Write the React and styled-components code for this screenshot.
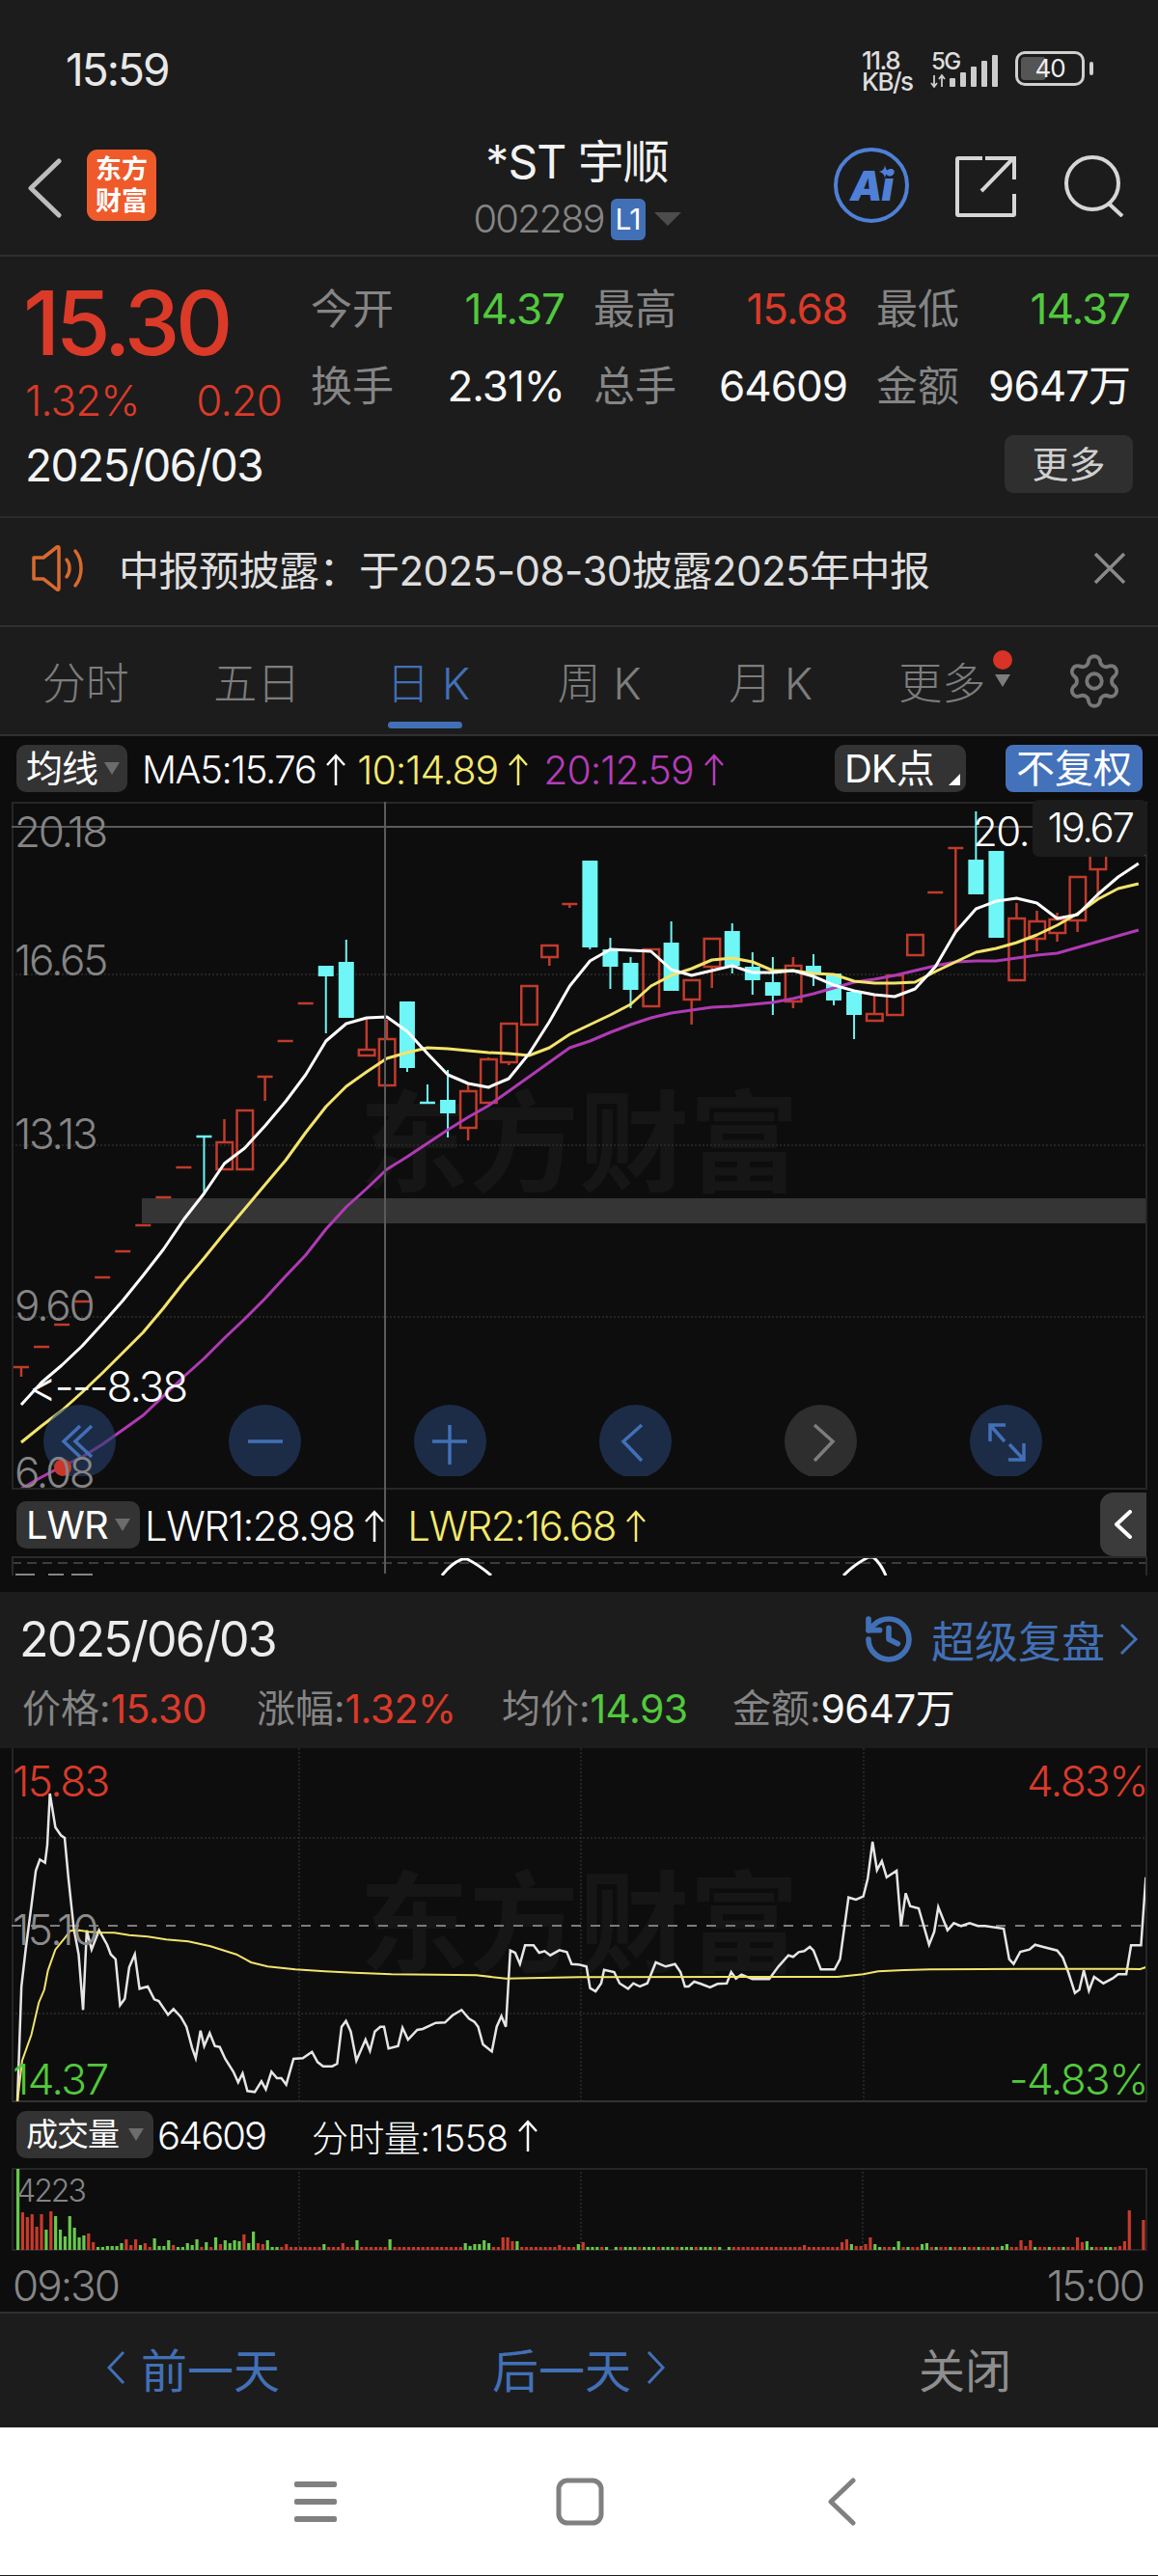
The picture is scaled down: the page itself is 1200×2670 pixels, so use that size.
import React from "react";
import styled, { createGlobalStyle } from "styled-components";
import { Settings, History } from "lucide-react";

const RED = "#db3a29";
const GREEN = "#52c93c";
const BLUE = "#4270b6";
const GREY = "#858585";
const PANEL = "#1c1c1c";
const PLOT = "#0d0d0d";
const LINE = "#303030";
const CANDLE_RED = "#c23b2c";
const CANDLE_CYAN = "#6ff6f6";

const Global = createGlobalStyle`
  html, body { margin: 0; padding: 0; background: ${PANEL}; }
  body {
    font-family: Inter, "Noto Sans CJK SC", sans-serif;
    font-weight: 400;
    color: #eee;
  }
  * { box-sizing: border-box; }
`;

// [candle index, body top, body bottom, high, low] in page pixels, x comes from the index
const up = [
  [0, 1418, 1418, 1418, 1428], [1, 1397, 1397], [2, 1374, 1374], [3, 1350, 1350], [4, 1325, 1325],
  [5, 1298, 1298], [6, 1271, 1271], [7, 1242, 1242], [8, 1211, 1211], [10, 1185, 1213, 1161],
  [11, 1152, 1213], [12, 1117, 1117, 1117, 1142], [13, 1080, 1080], [14, 1041, 1041],
  [17, 1089, 1095, 1057], [18, 1078, 1126, 1058], [22, 1132, 1170, 1125, 1183], [23, 1099, 1144, 1097],
  [24, 1062, 1102, 1062, 1105], [25, 1023, 1063], [26, 981, 993, 981, 1002], [27, 938, 938, 938, 942],
  [31, 985, 1044], [33, 1017, 1037, 1017, 1063], [34, 974, 1003, 974, 1025], [38, 1002, 1039, 993, 1046],
  [42, 1052, 1059, 1033], [43, 1012, 1053], [44, 970, 991], [45, 926, 926], [46, 880, 880, 880, 967],
  [49, 953, 1017, 937], [50, 956, 974, 945, 987], [51, 954, 968, 947, 977], [52, 910, 955, 910, 967],
  [53, 880, 902, 880, 933], [55, 887, 887],
];

const down = [
  [9, 1179, 1179, 1179, 1238], [15, 1002, 1013, 1002, 1072], [16, 998, 1056, 975], [19, 1039, 1108, 1039, 1112],
  [20, 1144, 1144, 1125], [21, 1141, 1155, 1110, 1180], [28, 893, 983, 893, 985], [29, 985, 1003, 973, 1026],
  [30, 999, 1027, 993, 1046], [32, 978, 1028, 956], [35, 966, 1002, 958, 1010], [36, 1003, 1017, 988, 1032],
  [37, 1019, 1033, 993, 1053], [39, 1002, 1011, 990, 1023], [40, 1010, 1038, 1010, 1043], [41, 1029, 1053, 1029, 1078],
  [47, 892, 928, 842], [48, 883, 973],
];

const ma5 = [1457,1434,1416,1396,1373,1349,1323,1296,1265,1238,1207,1191,1168,1143,1115,1080,1062,1056,1055,1070,1093,1115,1124,1128,1119,1093,1060,1023,997,985,986,987,1006,1012,1007,1002,1009,1009,1007,1013,1022,1028,1032,1034,1026,1003,967,943,935,932,937,953,949,928,910,896];
const ma10 = [1496,1479,1463,1444,1424,1403,1382,1357,1330,1305,1279,1254,1229,1204,1175,1148,1127,1112,1098,1092,1087,1088,1090,1092,1093,1095,1087,1073,1063,1053,1042,1023,1012,1005,996,994,998,1007,1007,1010,1011,1018,1020,1020,1019,1008,998,988,984,978,970,960,948,933,922,917];
const ma20 = [1544,1532,1521,1511,1498,1483,1468,1448,1428,1409,1388,1368,1347,1324,1302,1275,1252,1233,1213,1200,1186,1172,1159,1147,1132,1117,1102,1087,1080,1071,1063,1056,1051,1048,1045,1044,1042,1040,1036,1031,1025,1019,1016,1012,1007,1002,998,997,997,994,991,989,983,977,971,965];

const candleX = (i) => 22 + 21.05 * i;
const maPoints = (ys) => ys.map((y, i) => `${candleX(i).toFixed(1)},${y}`).join(" ");

// intraday traces, one list per half of the plot
const priceLeft = [[47,1140],[58,780],[70,660],[85,530],[97,420],[108,385],[122,395],[128,340],[135,180],[150,285],[165,310],[175,318],[185,440],[200,600],[213,680],[225,853],[235,605],[248,665],[268,605],[290,650],[300,680],[313,695],[325,838],[338,818],[350,720],[365,680],[378,787],[400,780],[418,820],[430,825],[455,868],[470,850],[490,875],[505,905],[520,970],[530,1003],[543,917],[553,965],[568,925],[582,965],[595,968],[610,1005],[632,1045],[645,1078],[657,1050],[670,1105],[690,1108],[708,1075],[720,1100],[735,1045],[750,1065],[762,1065],[775,1085],[795,1005],[820,1003],[845,983],[860,1015],[875,1028],[900,1028],[913,1020],[925,905],[937,887],[950,920],[965,1010],[990,945],[1002,980],[1015,920],[1030,905],[1040,905],[1052,973],[1078,965],[1090,908],[1105,945],[1130,915],[1145,912],[1180,893],[1205,892],[1225,870],[1250,853],[1270,880],[1285,890],[1295,905],[1308,960],[1332,982],[1345,905],[1358,872],[1370,905],[1382,668],[1395,675],[1408,710],[1422,652],[1445,652],[1460,675],[1475,670],[1490,683],[1515,667],[1535,673],[1548,710],[1568,712]];
const priceRight = [[0,712],[20,718],[30,785],[45,795],[60,770],[68,728],[95,735],[110,770],[133,787],[147,770],[165,780],[185,770],[208,705],[235,718],[260,710],[275,735],[287,780],[297,780],[312,765],[330,772],[355,783],[375,772],[400,770],[412,735],[425,755],[440,743],[470,757],[515,757],[540,718],[567,683],[580,688],[595,673],[610,670],[625,657],[635,668],[655,727],[692,727],[707,695],[730,503],[750,510],[770,500],[782,445],[795,330],[807,418],[820,390],[833,440],[860,420],[872,592],[885,490],[897,530],[920,537],[948,650],[962,610],[973,533],[998,605],[1015,583],[1035,592],[1058,583],[1080,592],[1100,592],[1150,600],[1165,695],[1177,710],[1195,672],[1220,665],[1235,650],[1260,658],[1295,668],[1310,690],[1325,735],[1343,800],[1355,790],[1367,730],[1381,793],[1395,750],[1420,770],[1445,755],[1460,742],[1482,742],[1495,652],[1522,652],[1535,440]];
const avgLeft = [[47,1140],[60,1010],[85,930],[105,830],[120,790],[130,730],[150,665],[175,630],[190,607],[215,605],[240,610],[270,612],[310,613],[350,620],[400,625],[450,634],[510,640],[570,655],[640,680],[680,705],[725,718],[800,727],[880,733],[960,737],[1060,742],[1180,743],[1290,745],[1370,755],[1568,751]];
const avgRight = [[0,751],[700,750],[770,742],[810,733],[880,729],[950,727],[1200,725],[1480,725],[1520,726],[1535,720]];

const tracePoints = (pts, startX) =>
  pts.map(([x, y]) => `${(startX + (x * 600) / 1568).toFixed(1)},${(1800 + y / 3).toFixed(1)}`).join(" ");

// volume bars: positive closes up (red), negative closes down (green)
const tallBars = {
  0:-84,1:39,2:34,3:37,4:24,5:37,6:-21,7:40,8:-35,9:-21,10:-14,11:-35,12:-23,13:-13,14:-15,15:17,16:8,
  17:-3,18:-3,19:-4,20:-4,21:-4,22:-7,23:11,24:5,25:11,26:-5,27:7,28:3,29:-12,30:-4,31:-4,32:-10,33:5,34:-3,35:-3,
  36:-7,37:-5,38:-11,39:3,40:-8,41:3,42:-13,43:6,44:-10,45:-7,46:-10,47:-9,48:16,49:-7,50:-19,51:7,52:6,53:-10,54:-3,55:-3,
  56:3,57:6,58:3,65:-6,69:7,72:-10,79:-11,95:-7,96:-4,97:-6,98:-6,99:-10,100:-7,103:13,104:13,105:9,106:-9,115:5,119:-6,120:8,
  126:0,150:0,167:5,175:8,176:11,177:-6,178:4,179:4,180:6,181:13,182:-6,187:-9,192:-6,193:-7,209:-4,210:-6,213:10,214:4,215:10,
  225:13,226:8,227:-9,232:-3,234:4,235:9,236:41,237:0,238:0,239:31,
};
const smallBar = (i) => {
  if (i > 120 && i < 152) return i % 4 === 0 ? 3 : -3;
  if (i > 182 && i % 3 === 0) return -3;
  return 3;
};
const volumes = Array.from({ length: 240 }, (_, i) => (i in tallBars ? tallBars[i] : smallBar(i)));

const App = () => (
  <Phone>
    <Global />
    <Top>
      <StatusBar>
        <Clock>15:59</Clock>
        <StatusRight>
          <NetSpeed>
            <span>11.8</span>
            <span>KB/s</span>
          </NetSpeed>
          <Signal>
            <NetLabel>5G</NetLabel>
            <svg width="70" height="34" viewBox="0 0 70 34">
              <path d="M4 21v12M1 29l3 4 3-4M12 33V21M9 25l3-4 3 4" stroke="#ccc" strokeWidth="1.800" fill="none" />
              <g fill="#ccc">
                <rect x="20" y="24" width="6" height="9" rx="1" />
                <rect x="31" y="18" width="6" height="15" rx="1" />
                <rect x="42" y="12" width="6" height="21" rx="1" />
                <rect x="53" y="6" width="6" height="27" rx="1" />
                <rect x="64" y="0" width="6" height="33" rx="1" />
              </g>
            </svg>
          </Signal>
          <Battery>
            <BatteryFill />
            <BatteryLevel>40</BatteryLevel>
          </Battery>
          <BatteryCap />
        </StatusRight>
      </StatusBar>

      <Header>
        <HeaderLeft>
          <svg width="36" height="62" viewBox="0 0 36 62">
            <path d="M33 3L4 31l29 28" stroke="#bdbdbd" strokeWidth="5" fill="none" strokeLinecap="round" strokeLinejoin="round" />
          </svg>
          <Logo>
            <span>东方</span>
            <span>财富</span>
          </Logo>
        </HeaderLeft>
        <HeaderCenter>
          <Title>*ST 宇顺</Title>
          <CodeRow>
            <Code>002289</Code>
            <LevelBadge>L1</LevelBadge>
            <Caret $size={14} $color="#4c4c4c" />
          </CodeRow>
        </HeaderCenter>
        <HeaderRight>
          <AiBadge>
            <AiText>Ai</AiText>
            <svg width="12" height="14" viewBox="0 0 12 14">
              <path d="M6 0c.6 4 2 6 6 7-4 1-5.400 3-6 7-.6-4-2-6-6-7 4-1 5.400-3 6-7z" fill="#4f80d8" />
            </svg>
          </AiBadge>
          <svg width="64" height="64" viewBox="0 0 64 64">
            <path d="M28 3H3a1 1 0 0 0-1 1v57a1 1 0 0 0 1 1h57a1 1 0 0 0 1-1V40" stroke="#d6d6d6" strokeWidth="4" fill="none" />
            <path d="M27 37L60 3M31 3h30v22" stroke="#d6d6d6" strokeWidth="4" fill="none" />
          </svg>
          <svg width="66" height="64" viewBox="0 0 66 64">
            <circle cx="30" cy="29" r="27" stroke="#d6d6d6" strokeWidth="4" fill="none" />
            <path d="M47 50l14 13" stroke="#d6d6d6" strokeWidth="4" fill="none" />
          </svg>
        </HeaderRight>
      </Header>
    </Top>

    <Quote>
      <PriceColumn>
        <Price>15.30</Price>
        <ChangeRow>
          <span>1.32%</span>
          <span>0.20</span>
        </ChangeRow>
        <QuoteDate>2025/06/03</QuoteDate>
      </PriceColumn>
      <StatsColumn>
        <StatsGrid>
          <Stat><StatLabel>今开</StatLabel><StatValue $tone={GREEN}>14.37</StatValue></Stat>
          <Stat><StatLabel>最高</StatLabel><StatValue $tone={RED}>15.68</StatValue></Stat>
          <Stat><StatLabel>最低</StatLabel><StatValue $tone={GREEN}>14.37</StatValue></Stat>
          <Stat><StatLabel>换手</StatLabel><StatValue>2.31%</StatValue></Stat>
          <Stat><StatLabel>总手</StatLabel><StatValue>64609</StatValue></Stat>
          <Stat><StatLabel>金额</StatLabel><StatValue>9647万</StatValue></Stat>
        </StatsGrid>
        <MoreButton>更多</MoreButton>
      </StatsColumn>
    </Quote>

    <Notice>
      <svg width="54" height="48" viewBox="0 0 54 48">
        <path d="M2 13h10L26 2c1-.8 2 0 2 1v42c0 1-1 1.800-2 1L12 35H2z" stroke="#d96a2e" strokeWidth="3.500" fill="none" strokeLinejoin="round" />
        <path d="M36 15c4 5 4 13 0 18M45 6c8 10 8 26 0 36" stroke="#d96a2e" strokeWidth="3.500" fill="none" strokeLinecap="round" />
      </svg>
      <NoticeText>中报预披露：于2025-08-30披露2025年中报</NoticeText>
      <svg width="34" height="32" viewBox="0 0 34 32">
        <path d="M2 1l30 30M32 1L2 31" stroke="#8a8a8a" strokeWidth="3.500" />
      </svg>
    </Notice>

    <Tabs>
      <Tab>分时</Tab>
      <Tab>五日</Tab>
      <Tab $active>日 K</Tab>
      <Tab>周 K</Tab>
      <Tab>月 K</Tab>
      <Tab>
        更多
        <TabDot />
        <TabCaret />
      </Tab>
      <GearSlot>
        <Settings size={62} strokeWidth={1.5} color="#787878" />
      </GearSlot>
    </Tabs>

    <KlineSection>
      <Crosshair />
      <Toolbar>
        <Chip $width={115} $size={38}>
          均线
          <ChipCaret $right={8} />
        </Chip>
        <MaText $color="#fff" $left={15} $spacing={-1.4}>MA5:15.76<UpArrow /></MaText>
        <MaText $color="#f5e96e" $left={10} $size={41} $spacing={-1}>10:14.89<UpArrow /></MaText>
        <MaText $color="#b53cb8" $left={14} $size={41} $spacing={-1}>20:12.59<UpArrow /></MaText>
        <ToolbarSpacer />
        <Chip $width={136}>
          DK点
          <ChipCorner />
        </Chip>
        <AdjustButton>不复权</AdjustButton>
      </Toolbar>

      <KlinePlot>
        <Watermark $left={358} $top={292}>东方财富</Watermark>
        <svg width="1175" height="711" viewBox="12 832 1175 711">
          <PriceBand x="147" y="1243" width="1040" height="26" />
          <line x1="12" x2="1187" y1="858" y2="858" stroke="#5a5a5a" strokeWidth="2" />
          {[1011, 1188, 1366].map((y) => (
            <line key={y} x1="12" x2="1187" y1={y} y2={y} stroke="#2c2c2c" strokeWidth="1.500" strokeDasharray="2 2" />
          ))}
          {up.map(([i, top, bottom, high, low]) => {
            const x = candleX(i);
            const flat = top === bottom;
            return (
              <g key={i} stroke={CANDLE_RED} strokeWidth="2.500" fill="none">
                {high < top && <line x1={x} x2={x} y1={high} y2={top} />}
                {low > bottom && <line x1={x} x2={x} y1={bottom} y2={low} />}
                {flat ? (
                  <line x1={x - 8} x2={x + 8} y1={top} y2={top} />
                ) : (
                  <rect x={x - 8} y={top} width="16.500" height={bottom - top} />
                )}
              </g>
            );
          })}
          {down.map(([i, top, bottom, high, low]) => {
            const x = candleX(i);
            const flat = top === bottom;
            return (
              <g key={i}>
                {high < top && <line x1={x} x2={x} y1={high} y2={top} stroke={CANDLE_CYAN} strokeWidth="2" />}
                {low > bottom && <line x1={x} x2={x} y1={bottom} y2={low} stroke={CANDLE_CYAN} strokeWidth="2" />}
                {flat ? (
                  <line x1={x - 8} x2={x + 8} y1={top} y2={top} stroke={CANDLE_CYAN} strokeWidth="2.500" />
                ) : (
                  <rect x={x - 8} y={top} width="16" height={bottom - top} fill={CANDLE_CYAN} />
                )}
              </g>
            );
          })}
          <polyline points={maPoints(ma20)} stroke="#b03ab4" strokeWidth="3" fill="none" strokeLinejoin="round" />
          <polyline points={maPoints(ma10)} stroke="#f3e46c" strokeWidth="3" fill="none" strokeLinejoin="round" />
          <polyline points={maPoints(ma5)} stroke="#ffffff" strokeWidth="3" fill="none" strokeLinejoin="round" />
        </svg>
        <ZoomRow>
          <ZoomButton>
            <RedSpot />
            <ZoomIcon viewBox="0 0 75 75">
              <path d="M38 22L21 38l17 16M50 22L33 38l17 16" />
            </ZoomIcon>
          </ZoomButton>
          <ZoomButton>
            <ZoomIcon viewBox="0 0 75 75"><path d="M20 38h36" /></ZoomIcon>
          </ZoomButton>
          <ZoomButton>
            <ZoomIcon viewBox="0 0 75 75"><path d="M19 38h36M37 21v41" /></ZoomIcon>
          </ZoomButton>
          <ZoomButton>
            <ZoomIcon viewBox="0 0 75 75"><path d="M44 21L25 38l19 20" /></ZoomIcon>
          </ZoomButton>
          <ZoomButton $muted>
            <ZoomIcon $muted viewBox="0 0 75 75"><path d="M31 21l19 17-19 20" /></ZoomIcon>
          </ZoomButton>
          <ZoomButton>
            <ZoomIcon viewBox="0 0 75 75"><path d="M21 38V21h16M21 21l15 17M56 40v17H40M56 57L41 41" /></ZoomIcon>
          </ZoomButton>
        </ZoomRow>
        <AxisLabel $top={6}>20.18</AxisLabel>
        <AxisLabel $top={139}>16.65</AxisLabel>
        <AxisLabel $top={319}>13.13</AxisLabel>
        <AxisLabel $top={497}>9.60</AxisLabel>
        <AxisLabel $top={670}>6.08</AxisLabel>
        <HighMark>20.</HighMark>
        <CrossTip>19.67</CrossTip>
        <LowMark>&lt;---8.38</LowMark>
      </KlinePlot>

      <IndicatorBar>
        <Chip $width={128}>
          LWR
          <ChipCaret $right={10} />
        </Chip>
        <MaText $color="#fff" $left={5} $size={42} $spacing={-1.5}>LWR1:28.98<UpArrow /></MaText>
        <MaText $color="#f5e96e" $left={22} $size={42} $spacing={-1.5}>LWR2:16.68<UpArrow /></MaText>
        <CollapseHandle>
          <svg width="20" height="30" viewBox="0 0 20 30">
            <path d="M17 2L3 15l14 13" stroke="#fff" strokeWidth="4" fill="none" strokeLinecap="round" strokeLinejoin="round" />
          </svg>
        </CollapseHandle>
      </IndicatorBar>

      <ClippedPlot>
        <svg width="1175" height="20" viewBox="12 1612 1175 20">
          <line x1="12" x2="1187" y1="1619" y2="1619" stroke="#3c3c3c" strokeWidth="2" strokeDasharray="10 6" />
          <path d="M16 1631h20M50 1631h16M74 1631h22" stroke="#858585" strokeWidth="2" />
          <path d="M458 1632c6-8 13-14 21-17 h5c8 4 17 10 25 17M874 1632c8-8 16-14 26-19 h5c6 5 10 12 13 19" stroke="#fff" strokeWidth="3" fill="none" />
        </svg>
      </ClippedPlot>
    </KlineSection>

    <DayPanel>
      <DayRow>
        <DayDate>2025/06/03</DayDate>
        <ReplayLink>
          <History size={56} strokeWidth={2.4} />
          <ReplayText>超级复盘</ReplayText>
          <svg width="20" height="32" viewBox="0 0 20 32">
            <path d="M2 1l15 15L2 31" stroke={BLUE} strokeWidth="3" fill="none" />
          </svg>
        </ReplayLink>
      </DayRow>
      <DayStats>
        <DayStat $width={243}>价格:<StatValue $tone={RED}>15.30</StatValue></DayStat>
        <DayStat $width={254}>涨幅:<StatValue $tone={RED}>1.32%</StatValue></DayStat>
        <DayStat $width={239}>均价:<StatValue $tone={GREEN}>14.93</StatValue></DayStat>
        <DayStat>金额:<StatValue>9647万</StatValue></DayStat>
      </DayStats>
    </DayPanel>

    <IntradaySection>
      <IntradayPlot>
        <Watermark $left={358} $top={122}>东方财富</Watermark>
        <svg width="1175" height="366" viewBox="12 1813 1175 366">
          {[1906, 2088].map((y) => (
            <line key={y} x1="12" x2="1187" y1={y} y2={y} stroke="#2c2c2c" strokeWidth="1.500" strokeDasharray="2 2" />
          ))}
          {[310, 602, 895].map((x) => (
            <line key={x} x1={x} x2={x} y1="1813" y2="2179" stroke="#2c2c2c" strokeWidth="1.500" strokeDasharray="2 2" />
          ))}
          <line x1="12" x2="1187" y1="1997" y2="1997" stroke="#7c7c7c" strokeWidth="2" strokeDasharray="10 10" />
          <polyline points={tracePoints(priceLeft, 0)} stroke="#e6e6e6" strokeWidth="2.500" fill="none" />
          <polyline points={tracePoints(priceRight, 600)} stroke="#e6e6e6" strokeWidth="2.500" fill="none" />
          <polyline points={tracePoints(avgLeft, 0)} stroke="#f3e46c" strokeWidth="2" fill="none" />
          <polyline points={tracePoints(avgRight, 600)} stroke="#f3e46c" strokeWidth="2" fill="none" />
        </svg>
        <PlotLabel $top={11} $tone={RED}>15.83</PlotLabel>
        <PlotLabel $top={165} $tone="#8c8c8c">15.10</PlotLabel>
        <PlotLabel $top={320} $tone={GREEN}>14.37</PlotLabel>
        <PlotLabel $top={11} $right $tone={RED}>4.83%</PlotLabel>
        <PlotLabel $top={320} $right $tone={GREEN}>-4.83%</PlotLabel>
      </IntradayPlot>

      <VolumeBar>
        <Chip $width={142} $size={33}>
          成交量
          <ChipCaret $right={10} />
        </Chip>
        <MaText $color="#fff" $left={4}>64609</MaText>
        <MaText $color="#fff" $left={48} $size={38} $spacing={-0.6}>分时量:1558<UpArrow /></MaText>
      </VolumeBar>

      <VolumePlot>
        <svg width="1175" height="85" viewBox="12 2248 1175 85">
          {[310, 602, 894].map((x) => (
            <line key={x} x1={x} x2={x} y1="2248" y2="2333" stroke="#2c2c2c" strokeWidth="1.500" strokeDasharray="2 2" />
          ))}
          {volumes.map((v, i) => (
            <rect
              key={i}
              x={17 + 4.88 * i}
              y={2333 - Math.abs(v)}
              width="3.200"
              height={Math.abs(v)}
              fill={v > 0 ? "#c93a2a" : "#67c94c"}
            />
          ))}
        </svg>
        <VolumeMax>4223</VolumeMax>
      </VolumePlot>

      <TimeAxis>
        <span>09:30</span>
        <span>15:00</span>
      </TimeAxis>
    </IntradaySection>

    <Footer>
      <FooterAction>
        <svg width="20" height="34" viewBox="0 0 20 34">
          <path d="M18 1L3 17l15 16" stroke={BLUE} strokeWidth="3" fill="none" />
        </svg>
        前一天
      </FooterAction>
      <FooterAction>
        后一天
        <svg width="20" height="34" viewBox="0 0 20 34">
          <path d="M2 1l15 16L2 33" stroke={BLUE} strokeWidth="3" fill="none" />
        </svg>
      </FooterAction>
      <FooterAction $muted>关闭</FooterAction>
    </Footer>

    <NavBar>
      <svg width="44" height="42" viewBox="0 0 44 42" fill="#808080">
        <rect y="0" width="44" height="6" rx="2" />
        <rect y="18" width="44" height="6" rx="2" />
        <rect y="36" width="44" height="6" rx="2" />
      </svg>
      <svg width="50" height="50" viewBox="0 0 50 50">
        <rect x="3" y="3" width="44" height="44" rx="9" stroke="#808080" strokeWidth="5" fill="none" />
      </svg>
      <svg width="30" height="50" viewBox="0 0 30 50">
        <path d="M27 3L4 25l23 22" stroke="#808080" strokeWidth="5" fill="none" strokeLinecap="round" strokeLinejoin="round" />
      </svg>
    </NavBar>
  </Phone>
);

const UpArrow = () => (
  <ArrowIcon width="24" height="34" viewBox="0 0 24 34">
    <path d="M12 33V2M3 12l9-10 9 10" stroke="currentColor" strokeWidth="2.500" fill="none" />
  </ArrowIcon>
);

export default App;

const Phone = styled.div`
  width: 1200px;
  height: 2670px;
  overflow: hidden;
  background: ${PANEL};
`;

const Top = styled.div`
  height: 266px;
  border-bottom: 2px solid ${LINE};
`;

const StatusBar = styled.div`
  height: 124px;
  padding: 50px 67px 0 68px;
  display: flex;
  justify-content: space-between;
  align-items: flex-start;
`;

const Clock = styled.div`
  font-size: 46px;
  line-height: 44px;
  letter-spacing: -2px;
  color: #e8e8e8;
`;

const StatusRight = styled.div`
  display: flex;
  align-items: flex-start;
  padding-top: 2px;
`;

const NetSpeed = styled.div`
  display: flex;
  flex-direction: column;
  width: 71px;
  font-size: 26px;
  line-height: 22px;
  font-weight: 500;
  letter-spacing: -1.5px;
  color: #ddd;
`;

const Signal = styled.div`
  position: relative;
  width: 88px;
  height: 38px;
  padding-top: 5px;
`;

const NetLabel = styled.span`
  position: absolute;
  left: 1px;
  top: -3px;
  font-size: 24px;
  font-weight: 500;
  letter-spacing: -1.5px;
  color: #ddd;
`;

const Battery = styled.div`
  position: relative;
  width: 72px;
  height: 36px;
  margin-top: 1px;
  border: 3px solid #cfcfcf;
  border-radius: 10px;
  text-align: center;
`;

const BatteryFill = styled.div`
  position: absolute;
  left: 3px;
  top: 3px;
  bottom: 3px;
  width: 26px;
  background: #555;
  border-radius: 4px;
`;

const BatteryLevel = styled.span`
  position: relative;
  font-size: 26px;
  line-height: 30px;
  letter-spacing: -1px;
  color: #eee;
`;

const BatteryCap = styled.div`
  width: 4px;
  height: 14px;
  margin: 12px 0 0 5px;
  background: #cfcfcf;
  border-radius: 2px;
`;

const Header = styled.div`
  display: grid;
  grid-template-columns: 1fr auto 1fr;
  height: 140px;
  padding: 14px 32px 0 28px;
`;

const HeaderLeft = styled.div`
  display: flex;
  align-items: flex-start;
  gap: 26px;
  padding-top: 26px;
`;

const Logo = styled.div`
  width: 72px;
  height: 74px;
  margin-top: -9px;
  background: #ee5a2a;
  border-radius: 11px;
  display: flex;
  flex-direction: column;
  align-items: center;
  justify-content: center;
  font-size: 27px;
  line-height: 33px;
  font-weight: 700;
  color: #fff;
`;

const HeaderCenter = styled.div`
  display: flex;
  flex-direction: column;
  align-items: center;
`;

const Title = styled.div`
  font-size: 48px;
  line-height: 60px;
  letter-spacing: -1px;
  color: #f2f2f2;
`;

const CodeRow = styled.div`
  display: flex;
  align-items: center;
  gap: 7px;
  margin-top: 7px;
`;

const Code = styled.span`
  font-size: 40px;
  line-height: 44px;
  font-weight: 300;
  letter-spacing: -2px;
  color: ${GREY};
`;

const LevelBadge = styled.span`
  width: 36px;
  height: 43px;
  background: ${BLUE};
  border-radius: 6px;
  font-size: 30px;
  line-height: 43px;
  letter-spacing: -1px;
  text-align: center;
  color: #fff;
`;

const Caret = styled.span`
  width: 0;
  height: 0;
  margin-left: 2px;
  border-left: ${(p) => p.$size}px solid transparent;
  border-right: ${(p) => p.$size}px solid transparent;
  border-top: ${(p) => p.$size}px solid ${(p) => p.$color};
`;

const HeaderRight = styled.div`
  display: flex;
  justify-content: flex-end;
  align-items: flex-start;
  gap: 48px;
  padding-top: 23px;
`;

const AiBadge = styled.div`
  position: relative;
  width: 78px;
  height: 78px;
  margin-top: -8px;
  border: 4px solid #4f80d8;
  border-radius: 50%;
  display: flex;
  align-items: center;
  justify-content: center;
  & > svg {
    position: absolute;
    top: 14px;
    right: 15px;
  }
`;

const AiText = styled.span`
  font-size: 42px;
  font-weight: 900;
  font-style: italic;
  letter-spacing: -1px;
  color: #4f80d8;
`;

const Quote = styled.div`
  height: 271px;
  display: flex;
  border-bottom: 2px solid #2a2a2a;
`;

const PriceColumn = styled.div`
  width: 322px;
  padding: 19px 0 0 24px;
`;

const Price = styled.div`
  font-size: 92px;
  line-height: 100px;
  font-weight: 500;
  letter-spacing: -4.5px;
  color: ${RED};
`;

const ChangeRow = styled.div`
  display: flex;
  justify-content: space-between;
  width: 268px;
  margin-top: 5px;
  padding-left: 2px;
  font-size: 44px;
  line-height: 50px;
  font-weight: 300;
  letter-spacing: -1px;
  color: ${RED};
`;

const QuoteDate = styled.div`
  margin-top: 16px;
  padding-left: 2px;
  font-size: 46px;
  line-height: 52px;
  letter-spacing: -1.5px;
  color: #f4f4f4;
`;

const StatsColumn = styled.div`
  flex: 1;
  display: flex;
  flex-direction: column;
  padding: 29px 26px 0 0;
`;

const StatsGrid = styled.div`
  display: grid;
  grid-template-columns: repeat(3, 263px);
  column-gap: 30px;
  row-gap: 30px;
`;

const Stat = styled.div`
  display: flex;
  justify-content: space-between;
  align-items: center;
  height: 50px;
`;

const StatLabel = styled.span`
  font-size: 43px;
  line-height: 50px;
  color: ${GREY};
`;

const StatValue = styled.span`
  font-size: 44px;
  line-height: 50px;
  letter-spacing: -1px;
  color: ${(p) => p.$tone || "#f7f7f7"};
`;

const MoreButton = styled.div`
  align-self: flex-end;
  width: 133px;
  height: 60px;
  margin-top: 26px;
  background: #2f2f2f;
  border-radius: 9px;
  font-size: 38px;
  line-height: 60px;
  text-align: center;
  color: #cfcfcf;
`;

const Notice = styled.div`
  height: 113px;
  padding: 0 33px 8px;
  display: flex;
  align-items: center;
  justify-content: space-between;
  border-bottom: 2px solid ${LINE};
`;

const NoticeText = styled.div`
  flex: 1;
  margin-left: 36px;
  font-size: 42px;
  letter-spacing: -0.5px;
  color: #dedede;
`;

const Tabs = styled.div`
  height: 113px;
  padding-top: 6px;
  display: grid;
  grid-template-columns: repeat(6, 177.5px) 1fr;
  align-items: center;
  border-bottom: 2px solid ${LINE};
`;

const Tab = styled.div`
  position: relative;
  justify-self: center;
  font-size: 45px;
  line-height: 60px;
  font-weight: 300;
  color: ${(p) => (p.$active ? BLUE : "#7d7d7d")};
  ${(p) =>
    p.$active &&
    `
    &::after {
      content: "";
      position: absolute;
      left: 2px;
      right: 8px;
      bottom: -16px;
      height: 7px;
      border-radius: 4px;
      background: ${BLUE};
    }
  `}
`;

const TabDot = styled.span`
  position: absolute;
  right: -28px;
  top: -5px;
  width: 20px;
  height: 20px;
  border-radius: 50%;
  background: #d93226;
`;

const TabCaret = styled.span`
  position: absolute;
  right: -26px;
  top: 20px;
  width: 0;
  height: 0;
  border-left: 8px solid transparent;
  border-right: 8px solid transparent;
  border-top: 13px solid #7d7d7d;
`;

const GearSlot = styled.div`
  justify-self: end;
  padding: 0 35px 6px 0;
  display: flex;
`;

const KlineSection = styled.div`
  position: relative;
  height: 887px;
  background: ${PLOT};
`;

const Crosshair = styled.div`
  position: absolute;
  left: 398px;
  top: 68px;
  height: 800px;
  width: 2px;
  background: #5a5a5a;
  z-index: 3;
`;

const Toolbar = styled.div`
  height: 68px;
  padding: 9px 16px 0 17px;
  display: flex;
  align-items: flex-start;
`;

const ToolbarSpacer = styled.div`
  flex: 1;
`;

const Chip = styled.div`
  position: relative;
  width: ${(p) => p.$width}px;
  height: 49px;
  padding-left: 10px;
  background: #333;
  border-radius: 10px;
  font-size: ${(p) => p.$size || 40}px;
  line-height: 49px;
  letter-spacing: -1px;
  color: #fff;
`;

const ChipCaret = styled.span`
  position: absolute;
  right: ${(p) => p.$right}px;
  top: 18px;
  width: 0;
  height: 0;
  border-left: 8px solid transparent;
  border-right: 8px solid transparent;
  border-top: 13px solid #6c6c6c;
`;

const ChipCorner = styled.span`
  position: absolute;
  right: 6px;
  bottom: 7px;
  width: 0;
  height: 0;
  border-left: 12px solid transparent;
  border-bottom: 12px solid #fff;
`;

const AdjustButton = styled.div`
  width: 142px;
  height: 49px;
  margin-left: 41px;
  background: #4472ba;
  border-radius: 8px;
  font-size: 40px;
  line-height: 49px;
  text-align: center;
  color: #fff;
`;

const MaText = styled.div`
  display: flex;
  align-items: center;
  gap: 9px;
  height: 49px;
  margin-top: 1px;
  margin-left: ${(p) => p.$left}px;
  font-size: ${(p) => p.$size || 40}px;
  font-weight: 300;
  letter-spacing: ${(p) => p.$spacing ?? -2}px;
  color: ${(p) => p.$color};
`;

const ArrowIcon = styled.svg`
  flex: none;
`;

const KlinePlot = styled.div`
  position: relative;
  width: 1177px;
  height: 713px;
  margin-left: 12px;
  border: 2px solid #262626;
  & > svg {
    position: relative;
    display: block;
    margin: -2px 0 0 -2px;
  }
`;

const PriceBand = styled.rect`
  fill: #353535;
`;

const Watermark = styled.div`
  position: absolute;
  left: ${(p) => p.$left}px;
  top: ${(p) => p.$top}px;
  font-size: 114px;
  line-height: 120px;
  font-weight: 700;
  white-space: nowrap;
  color: #161616;
`;

const AxisLabel = styled.div`
  position: absolute;
  left: 1px;
  top: ${(p) => p.$top}px;
  font-size: 44px;
  line-height: 46px;
  font-weight: 300;
  letter-spacing: -2.2px;
  color: #858585;
`;

const ZoomRow = styled.div`
  position: absolute;
  left: 31px;
  top: 623px;
  height: 74px;
  display: flex;
  gap: 117px;
  overflow: hidden;
`;

const ZoomButton = styled.div`
  position: relative;
  width: 75px;
  height: 76px;
  border-radius: 50%;
  background: ${(p) => (p.$muted ? "rgba(68, 68, 68, 0.6)" : "rgba(38, 65, 110, 0.6)")};
`;

const ZoomIcon = styled.svg`
  position: absolute;
  inset: 0;
  fill: none;
  stroke: ${(p) => (p.$muted ? "#7d7d7d" : BLUE)};
  stroke-width: 3.5;
`;

const RedSpot = styled.span`
  position: absolute;
  left: 11px;
  bottom: 2px;
  width: 18px;
  height: 18px;
  border-radius: 50%;
  background: #c7382a;
`;

const HighMark = styled.div`
  position: absolute;
  left: 994px;
  top: 6px;
  font-size: 42px;
  line-height: 46px;
  font-weight: 300;
  letter-spacing: -1.5px;
  color: #fff;
`;

const CrossTip = styled.div`
  position: absolute;
  right: -2px;
  top: -4px;
  width: 119px;
  height: 59px;
  background: ${PANEL};
  border-radius: 7px;
  font-size: 42px;
  line-height: 58px;
  font-weight: 300;
  letter-spacing: -2.5px;
  text-align: center;
  color: #fff;
`;

const LowMark = styled.div`
  position: absolute;
  left: 16px;
  top: 581px;
  font-size: 44px;
  line-height: 46px;
  font-weight: 300;
  letter-spacing: -2px;
  color: #fff;
`;

const IndicatorBar = styled.div`
  position: relative;
  height: 69px;
  padding: 12px 0 0 17px;
  display: flex;
  align-items: flex-start;
`;

const CollapseHandle = styled.div`
  position: absolute;
  right: 12px;
  top: 3px;
  width: 48px;
  height: 66px;
  background: #3b3b3b;
  border-radius: 14px 0 0 14px;
  display: flex;
  align-items: center;
  justify-content: center;
`;

const ClippedPlot = styled.div`
  position: relative;
  width: 1177px;
  height: 20px;
  margin-left: 12px;
  overflow: hidden;
  border-top: 2px solid #2a2a2a;
  border-left: 2px solid #2a2a2a;
  border-right: 2px solid #2a2a2a;
  & > svg {
    display: block;
    margin: -2px 0 0 -2px;
  }
`;

const DayPanel = styled.div`
  height: 162px;
  padding: 20px 20px 0 20px;
`;

const DayRow = styled.div`
  display: flex;
  justify-content: space-between;
  align-items: center;
  height: 58px;
`;

const DayDate = styled.div`
  font-size: 50px;
  letter-spacing: -1.8px;
  color: #ececec;
`;

const ReplayLink = styled.div`
  display: flex;
  align-items: center;
  color: ${BLUE};
`;

const ReplayText = styled.span`
  margin: 0 15px 0 16px;
  font-size: 45px;
`;

const DayStats = styled.div`
  display: flex;
  margin-top: 18px;
  padding-left: 3px;
`;

const DayStat = styled.div`
  display: flex;
  align-items: center;
  width: ${(p) => (p.$width ? `${p.$width}px` : "auto")};
  font-size: 40px;
  line-height: 50px;
  color: ${GREY};
  & > span {
    font-size: 41px;
    letter-spacing: -0.6px;
  }
`;

const IntradaySection = styled.div`
  height: 586px;
  background: ${PLOT};
  border-bottom: 2px solid ${LINE};
`;

const IntradayPlot = styled.div`
  position: relative;
  width: 1177px;
  height: 367px;
  margin-left: 12px;
  border-left: 2px solid #262626;
  border-right: 2px solid #262626;
  border-bottom: 2px solid #333;
  & > svg {
    position: relative;
    display: block;
    margin-left: -2px;
  }
`;

const PlotLabel = styled.div`
  position: absolute;
  ${(p) => (p.$right ? "right: -2px;" : "left: -1px;")}
  top: ${(p) => p.$top}px;
  font-size: 44px;
  line-height: 46px;
  font-weight: 300;
  letter-spacing: -1.5px;
  color: ${(p) => p.$tone};
`;

const VolumeBar = styled.div`
  height: 68px;
  padding: 9px 0 0 17px;
  display: flex;
  align-items: flex-start;
`;

const VolumePlot = styled.div`
  position: relative;
  width: 1177px;
  height: 86px;
  margin-left: 12px;
  border: 2px solid #262626;
  & > svg {
    display: block;
    margin: -2px 0 0 -2px;
  }
`;

const VolumeMax = styled.div`
  position: absolute;
  left: 3px;
  top: 3px;
  font-size: 32px;
  line-height: 38px;
  font-weight: 300;
  letter-spacing: -2px;
  color: #858585;
`;

const TimeAxis = styled.div`
  display: flex;
  justify-content: space-between;
  padding: 11px 15px 0 13px;
  font-size: 44px;
  line-height: 50px;
  font-weight: 300;
  letter-spacing: -2px;
  color: #868686;
`;

const Footer = styled.div`
  height: 118px;
  padding-bottom: 6px;
  display: grid;
  grid-template-columns: repeat(3, 400px);
  align-items: center;
`;

const FooterAction = styled.div`
  display: flex;
  align-items: center;
  justify-content: center;
  gap: 16px;
  font-size: 48px;
  color: ${(p) => (p.$muted ? "#8e8e8e" : BLUE)};
`;

const NavBar = styled.div`
  height: 153px;
  padding-right: 8px;
  background: #fff;
  display: flex;
  align-items: center;
  justify-content: center;
  gap: 227px;
  & > svg:nth-child(2) { margin-right: 4px; }
`;
